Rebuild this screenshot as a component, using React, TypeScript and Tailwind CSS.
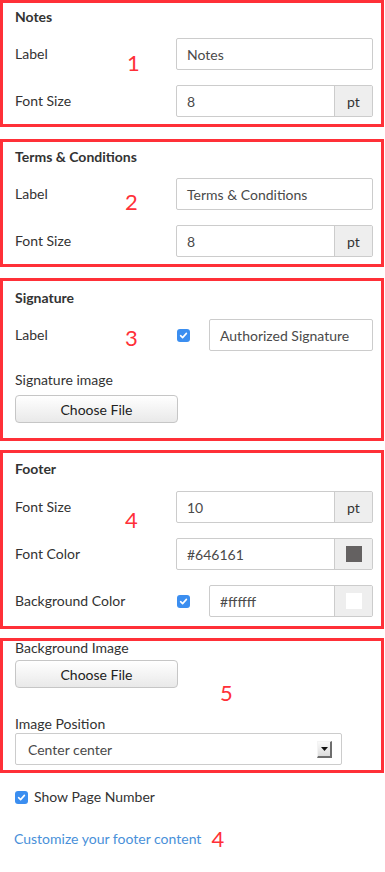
import React from "react";

const font = { fontFamily: "Lato, 'Open Sans', Arial, sans-serif" };

function Check() {
  return (
    <span className="flex items-center justify-center w-[13px] h-[13px] rounded-[3px] bg-[#3b8ef0] shrink-0">
      <svg width="9" height="9" viewBox="0 0 9 9">
        <path d="M1.6 4.7 L3.6 6.6 L7.4 2.4" fill="none" stroke="#fff" strokeWidth="1.6" strokeLinecap="round" strokeLinejoin="round" />
      </svg>
    </span>
  );
}

function TextBox({ value, className = "" }: { value: string; className?: string }) {
  return (
    <div className={`h-[32px] border border-[#cccccc] rounded-[2px] bg-white flex items-center pl-[10px] text-[14px] text-[#4a4a4a] ${className}`}>
      {value}
    </div>
  );
}

function AddonBox({ value, addon, className = "" }: { value: string; addon: React.ReactNode; className?: string }) {
  return (
    <div className={`h-[32px] border border-[#cccccc] rounded-[2px] bg-white flex text-[14px] text-[#4a4a4a] ${className}`}>
      <div className="flex-1 flex items-center pl-[10px]">{value}</div>
      <div className="w-[38px] bg-[#eeeeee] border-l border-[#cccccc] flex items-center justify-center text-[#333]">
        {addon}
      </div>
    </div>
  );
}

function Swatch({ color }: { color: string }) {
  return <span className="block w-[16px] h-[16px]" style={{ background: color }} />;
}

function Row({ label, children, className = "" }: { label: string; children: React.ReactNode; className?: string }) {
  return (
    <div className={`flex items-center ${className}`}>
      <div className="w-[161px] text-[14px] text-[#333] -mt-[2px]">{label}</div>
      <div className="flex-1 flex items-center">{children}</div>
    </div>
  );
}

function ChooseFile({ className = "" }: { className?: string }) {
  return (
    <div className={`w-[163px] h-[28px] border border-[#c6c6c6] rounded-[4px] bg-gradient-to-b from-white to-[#e9e9e9] flex items-center justify-center text-[14px] text-[#222] ${className}`}>
      Choose File
    </div>
  );
}

function Marker({ n, className }: { n: string; className: string }) {
  return <span className={`absolute text-[22px] leading-none text-[#ff3038] ${className}`}>{n}</span>;
}

export default function App() {
  return (
    <div className="w-[385px] h-[872px] bg-white" style={font}>
      {/* Notes */}
      <section className="relative w-[384px] border-[3px] border-[#ff3038] pl-[12px] pr-[8px] pt-[4px] pb-[7px]">
        <h3 className="text-[14px] leading-[20px] font-bold text-[#333]">Notes</h3>
        <Row label="Label" className="mt-[11px]">
          <TextBox value="Notes" className="w-full" />
        </Row>
        <Row label="Font Size" className="mt-[15px]">
          <AddonBox value="8" addon="pt" className="w-full" />
        </Row>
        <Marker n="1" className="left-[124px] top-[49px]" />
      </section>

      {/* Terms */}
      <section className="relative mt-[12px] w-[384px] border-[3px] border-[#ff3038] pl-[12px] pr-[8px] pt-[5px] pb-[7px]">
        <h3 className="text-[14px] leading-[20px] font-bold text-[#333]">Terms &amp; Conditions</h3>
        <Row label="Label" className="mt-[11px]">
          <TextBox value="Terms & Conditions" className="w-full" />
        </Row>
        <Row label="Font Size" className="mt-[15px]">
          <AddonBox value="8" addon="pt" className="w-full" />
        </Row>
        <Marker n="2" className="left-[122px] top-[49px]" />
      </section>

      {/* Signature */}
      <section className="relative mt-[11px] w-[384px] border-[3px] border-[#ff3038] pl-[12px] pr-[8px] pt-[7px] pb-[15px]">
        <h3 className="text-[14px] leading-[20px] font-bold text-[#333]">Signature</h3>
        <Row label="Label" className="mt-[11px]">
          <span className="ml-[1px]">
            <Check />
          </span>
          <TextBox value="Authorized Signature" className="flex-1 ml-[19px]" />
        </Row>
        <div className="mt-[19px] text-[14px] leading-[20px] text-[#333]">Signature image</div>
        <ChooseFile className="mt-[5px]" />
        <Marker n="3" className="left-[122px] top-[46px]" />
      </section>

      {/* Footer */}
      <section className="relative mt-[9px] w-[384px] border-[3px] border-[#ff3038] pl-[12px] pr-[8px] pt-[6px] pb-[9px]">
        <h3 className="text-[14px] leading-[20px] font-bold text-[#333]">Footer</h3>
        <Row label="Font Size" className="mt-[12px]">
          <AddonBox value="10" addon="pt" className="w-full" />
        </Row>
        <Row label="Font Color" className="mt-[15px]">
          <AddonBox value="#646161" addon={<Swatch color="#646161" />} className="w-full" />
        </Row>
        <Row label="Background Color" className="mt-[15px]">
          <span className="ml-[1px]">
            <Check />
          </span>
          <AddonBox value="#ffffff" addon={<Swatch color="#ffffff" />} className="flex-1 ml-[19px]" />
        </Row>
        <Marker n="4" className="left-[122px] top-[56px]" />
      </section>

      {/* Background image */}
      <section className="relative mt-[9px] w-[384px] border-[3px] border-[#ff3038] pl-[12px] pr-[8px] pt-0 pb-[5px]">
        <div className="text-[14px] leading-[16px] text-[#333] -mt-[1px] mb-[1px]">Background Image</div>
        <ChooseFile className="mt-[4px]" />
        <div className="mt-[26px] text-[14px] leading-[19px] text-[#333]">Image Position</div>
        <div className="w-[327px] h-[32px] border border-[#cccccc] rounded-[2px] bg-white flex items-center pl-[12px] pr-[9px] text-[14px] text-[#4a4a4a]">
          <span className="flex-1">Center center</span>
          <span className="w-[15px] h-[17px] bg-gradient-to-b from-[#fafafa] to-[#dddddd] border-r-2 border-b-2 border-[#6e6e6e] border-l border-t border-l-[#f4f4f4] border-t-[#f4f4f4] flex items-center justify-center">
            <svg width="7" height="4" viewBox="0 0 7 4">
              <path d="M0 0 H7 L3.5 4 Z" fill="#111" />
            </svg>
          </span>
        </div>
        <Marker n="5" className="left-[217px] top-[41px]" />
      </section>

      <div className="relative pl-[15px]">
        <div className="mt-[15px] flex items-center text-[14px] text-[#333]">
          <Check />
          <span className="ml-[6px] leading-[18px]">Show Page Number</span>
        </div>
        <div className="mt-[22px] flex items-center">
          <span className="-ml-[1px] text-[14px] leading-[18px] text-[#4990d9]">Customize your footer content</span>
          <span className="ml-[10px] text-[22px] leading-none text-[#ff3038]">4</span>
        </div>
      </div>
    </div>
  );
}
